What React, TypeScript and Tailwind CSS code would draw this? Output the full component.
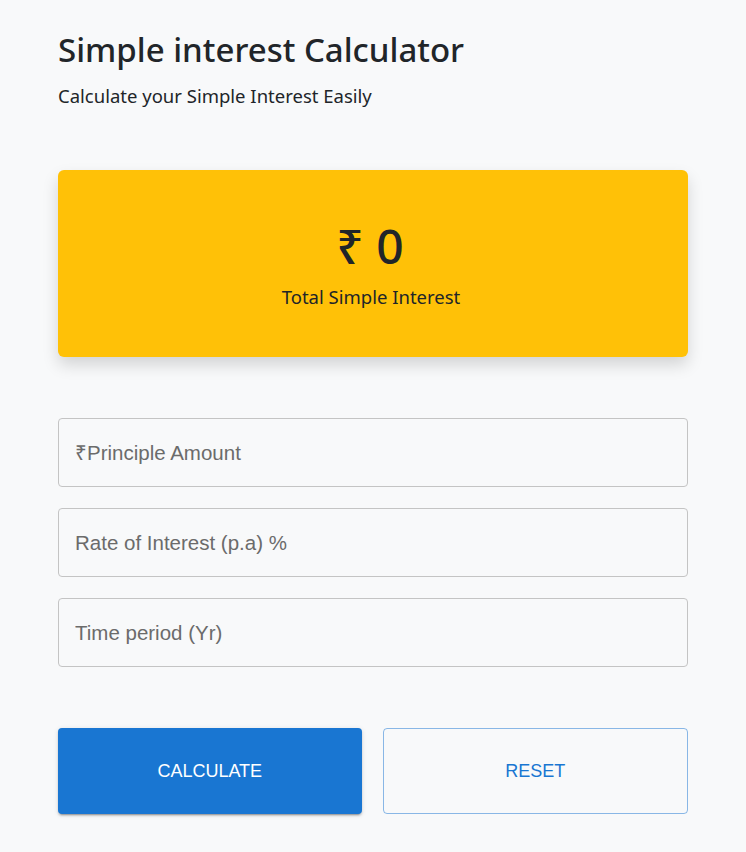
import { useState } from "react";

export default function App() {
  const [principle, setPrinciple] = useState("");
  const [rate, setRate] = useState("");
  const [time, setTime] = useState("");
  const [interest, setInterest] = useState(0);

  const calculate = () => {
    const p = parseFloat(principle) || 0;
    const r = parseFloat(rate) || 0;
    const t = parseFloat(time) || 0;
    setInterest((p * r * t) / 100);
  };

  const reset = () => {
    setPrinciple("");
    setRate("");
    setTime("");
    setInterest(0);
  };

  return (
    <div className="min-h-[852px] w-full bg-[#f8f9fa] font-['Noto_Sans',sans-serif] text-[#212529]">
      <div className="w-[630px] ml-[58px] pt-[28px]">
        {/* Heading */}
        <h1 className="text-[33px] leading-[44px] font-medium">Simple interest Calculator</h1>
        <p className="text-[18.5px] leading-[26px] mt-[11px]">Calculate your Simple Interest Easily</p>

        {/* Result card */}
        <div className="mt-[61px] h-[187px] rounded-[6px] bg-[#ffc107] shadow-[0_8px_16px_rgba(0,0,0,0.15)] flex flex-col items-center justify-center">
          <div className="text-[48px] leading-[56px] font-medium -ml-[6px]">₹ {interest}</div>
          <div className="text-[18.5px] leading-[26px] mt-[10px] -ml-[4px]">Total Simple Interest</div>
        </div>

        {/* Inputs */}
        <div className="mt-[61px] flex flex-col gap-[21px]">
          <input
            value={principle}
            onChange={(e) => setPrinciple(e.target.value)}
            placeholder="₹Principle Amount"
            className="h-[69px] w-full rounded-[4px] border border-[#c4c4c4] bg-transparent px-[16px] text-[20.5px] font-['Liberation_Sans',sans-serif] text-[#212529] placeholder:text-[#6b6b6b] outline-none"
          />
          <input
            value={rate}
            onChange={(e) => setRate(e.target.value)}
            placeholder="Rate of Interest (p.a) %"
            className="h-[69px] w-full rounded-[4px] border border-[#c4c4c4] bg-transparent px-[16px] text-[20.5px] font-['Liberation_Sans',sans-serif] text-[#212529] placeholder:text-[#6b6b6b] outline-none"
          />
          <input
            value={time}
            onChange={(e) => setTime(e.target.value)}
            placeholder="Time period (Yr)"
            className="h-[69px] w-full rounded-[4px] border border-[#c4c4c4] bg-transparent px-[16px] text-[20.5px] font-['Liberation_Sans',sans-serif] text-[#212529] placeholder:text-[#6b6b6b] outline-none"
          />
        </div>

        {/* Buttons */}
        <div className="mt-[61px] flex gap-[21px]">
          <button
            onClick={calculate}
            className="flex-1 h-[86px] rounded-[4px] bg-[#1976d2] text-white text-[18px] font-['Liberation_Sans',sans-serif] uppercase shadow-[0_3px_1px_-2px_rgba(0,0,0,0.2),0_2px_2px_0_rgba(0,0,0,0.14),0_1px_5px_0_rgba(0,0,0,0.12)]"
          >
            Calculate
          </button>
          <button
            onClick={reset}
            className="flex-1 h-[86px] rounded-[4px] border border-[rgba(25,118,210,0.5)] text-[#1976d2] text-[18px] font-['Liberation_Sans',sans-serif] uppercase"
          >
            Reset
          </button>
        </div>
      </div>
    </div>
  );
}
